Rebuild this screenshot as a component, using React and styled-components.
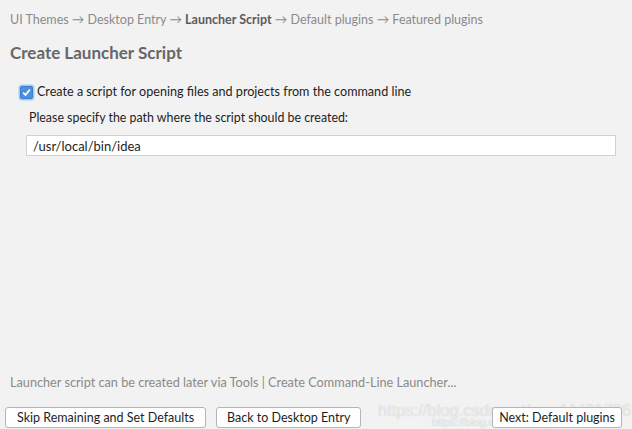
import { useState } from 'react';
import styled, { createGlobalStyle } from 'styled-components';

const GlobalStyle = createGlobalStyle`
  html, body {
    margin: 0;
    padding: 0;
    background: #f2f2f2;
  }
  body {
    font-family: Lato, "Noto Sans", sans-serif;
  }
`;

const Wizard = styled.div`
  position: relative;
  box-sizing: border-box;
  width: 632px;
  height: 429px;
  display: flex;
  flex-direction: column;
  background: #f2f2f2;
  overflow: hidden;
`;

const Breadcrumbs = styled.div`
  padding: 12px 0 0 10px;
  font-size: 12.5px;
  line-height: 16px;
  color: #8a8a8a;
  white-space: nowrap;
`;

const Step = styled.span`
  font-weight: ${p => (p.$current ? 700 : 400)};
  color: ${p => (p.$current ? '#5c5c5c' : '#8a8a8a')};
`;

const Title = styled.h1`
  margin: 15px 0 0 10px;
  font-size: 17px;
  line-height: 20px;
  font-weight: 700;
  color: #676767;
`;

const Body = styled.div`
  display: flex;
  flex-direction: column;
  padding: 0 16px 0 20px;
  margin-top: 21px;
`;

const CheckRow = styled.label`
  display: flex;
  align-items: center;
  gap: 4px;
  font-size: 12.6px;
  line-height: 16px;
  color: #1e1e1e;
  cursor: pointer;
`;

const Box = styled.span`
  box-sizing: border-box;
  width: 13px;
  height: 13px;
  border-radius: 2px;
  background: ${p => (p.$on ? '#4d8fe0' : '#fff')};
  border: 1px solid ${p => (p.$on ? '#3b7fd3' : '#9a9a9a')};
  box-shadow: 0 0 0 1.5px #a9c9f0;
  display: flex;
  align-items: center;
  justify-content: center;
`;

const Hint = styled.div`
  margin: 10px 0 0 9px;
  font-size: 12.4px;
  line-height: 16px;
  color: #1e1e1e;
`;

const PathInput = styled.input`
  box-sizing: border-box;
  margin: 9px 0 0 6px;
  height: 21px;
  padding: 0 6px;
  border: 1px solid #d0d0d0;
  background: #fff;
  font-family: Lato, "Noto Sans", sans-serif;
  font-size: 13px;
  color: #1e1e1e;
  outline: none;
`;

const Spacer = styled.div`
  flex: 1;
`;

const Note = styled.div`
  padding-left: 10px;
  font-size: 12.7px;
  line-height: 16px;
  color: #8a8a8a;
`;

const ButtonBar = styled.div`
  position: relative;
  z-index: 1;
  display: flex;
  align-items: center;
  gap: 10px;
  padding: 17px 10px 1px 5px;
`;

const Button = styled.button`
  box-sizing: border-box;
  height: 21px;
  padding: 0 ${p => p.$pad}px;
  border: 1px solid #b5b5b5;
  border-radius: 3px;
  background: #fff;
  font-family: Lato, "Noto Sans", sans-serif;
  font-size: 12.5px;
  line-height: 18px;
  color: #1e1e1e;
  cursor: pointer;
  &:last-child {
    margin-left: auto;
  }
`;

const Watermark = styled.div`
  position: absolute;
  z-index: 0;
  left: ${p => p.$x}px;
  top: ${p => p.$y}px;
  font-family: "Liberation Sans", Arial, sans-serif;
  font-size: ${p => p.$size}px;
  line-height: 1;
  color: rgba(255, 255, 255, 0.6);
  text-shadow: 0 0 1px rgba(120, 120, 120, 0.4);
  white-space: nowrap;
  pointer-events: none;
`;

const steps = ['UI Themes', 'Desktop Entry', 'Launcher Script', 'Default plugins', 'Featured plugins'];

const App = () => {
  const [enabled, setEnabled] = useState(true);
  const [path, setPath] = useState('/usr/local/bin/idea');

  return (
    <>
      <GlobalStyle />
      <Wizard>
        <Breadcrumbs>
          {steps.map((s, i) => (
            <span key={s}>
              {i > 0 && ' \u2192 '}
              <Step $current={s === 'Launcher Script'}>{s}</Step>
            </span>
          ))}
        </Breadcrumbs>
        <Title>Create Launcher Script</Title>
        <Body>
          <CheckRow onClick={() => setEnabled(!enabled)}>
            <Box $on={enabled}>
              {enabled && (
                <svg width="9" height="9" viewBox="0 0 9 9">
                  <path d="M1.2 4.6 L3.5 7 L7.8 1.6" fill="none" stroke="#fff" strokeWidth="1.7" />
                </svg>
              )}
            </Box>
            Create a script for opening files and projects from the command line
          </CheckRow>
          <Hint>Please specify the path where the script should be created:</Hint>
          <PathInput value={path} onChange={e => setPath(e.target.value)} />
        </Body>
        <Spacer />
        <Note>Launcher script can be created later via Tools | Create Command-Line Launcher...</Note>
        <Watermark $x={378} $y={402} $size={16.5}>https://blog.csdn.net/qq_44421796</Watermark>
        <Watermark $x={432} $y={417} $size={11}>https://blog.csdn.net/qq_44421796</Watermark>
        <ButtonBar>
          <Button $pad={11}>Skip Remaining and Set Defaults</Button>
          <Button $pad={10}>Back to Desktop Entry</Button>
          <Button $pad={6}>Next: Default plugins</Button>
        </ButtonBar>
      </Wizard>
    </>
  );
};

export default App;
